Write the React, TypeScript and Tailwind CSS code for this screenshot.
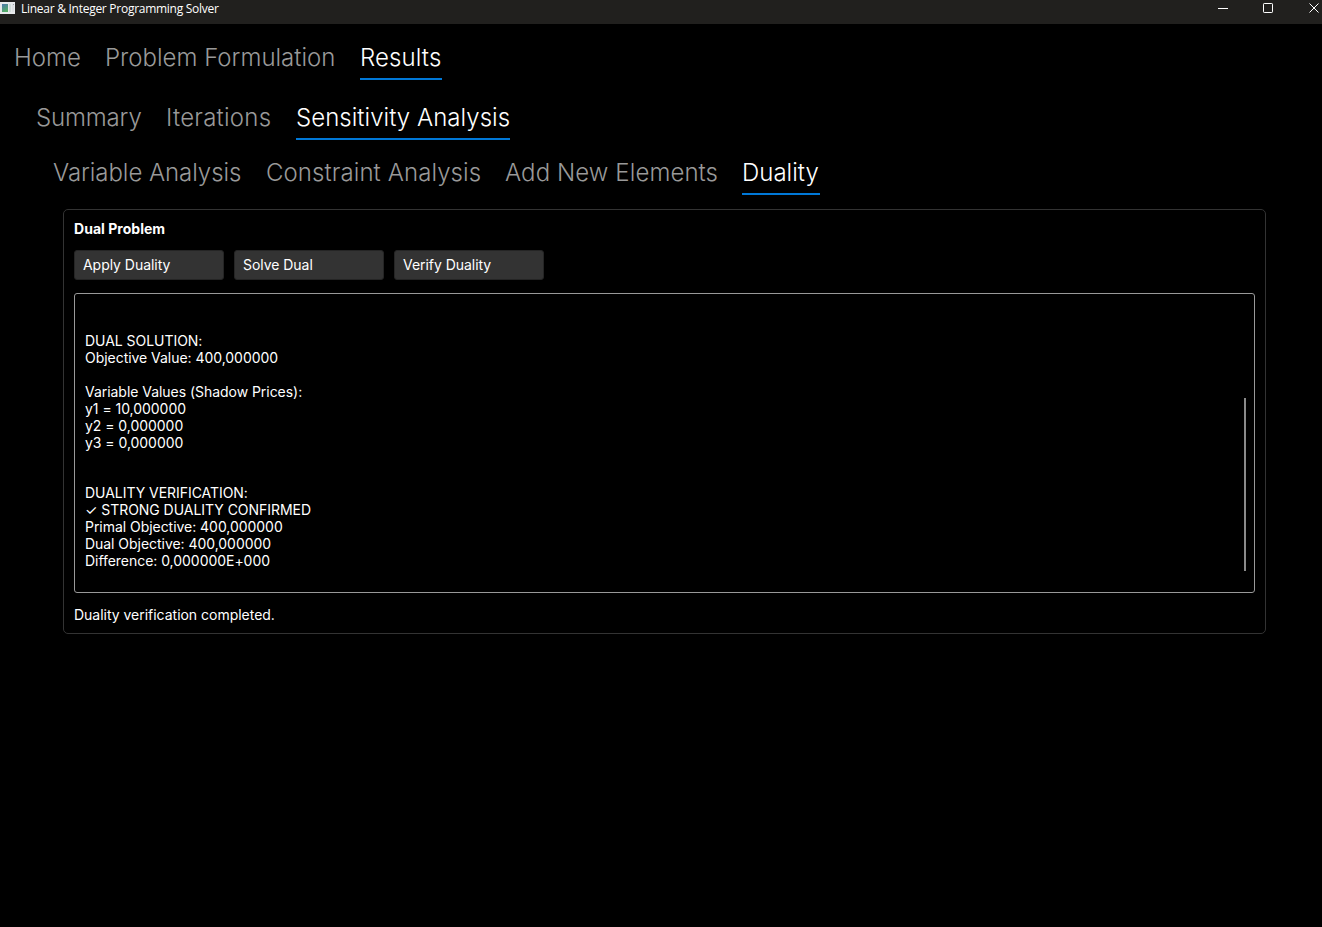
import React from "react";

type Tab = { label: string; size: string; active?: boolean };

const mainTabs: Tab[] = [
  { label: "Home", size: "w-[66px]" },
  { label: "Problem Formulation", size: "w-[230px]" },
  { label: "Results", size: "w-[82px] tracking-[0.1px]", active: true },
];
const resultTabs: Tab[] = [
  { label: "Summary", size: "w-[105px] tracking-[-0.15px]" },
  { label: "Iterations", size: "w-[105px] tracking-[0.24px]" },
  { label: "Sensitivity Analysis", size: "w-[214px] tracking-[0.03px]", active: true },
];
const analysisTabs: Tab[] = [
  { label: "Variable Analysis", size: "w-[188px] tracking-[-0.06px]" },
  { label: "Constraint Analysis", size: "w-[214px] tracking-[0.08px]" },
  { label: "Add New Elements", size: "w-[212px] tracking-[0.08px]" },
  { label: "Duality", size: "w-[78px]", active: true },
];

const solution = `DUAL SOLUTION:
Objective Value: 400,000000

Variable Values (Shadow Prices):
y1 = 10,000000
y2 = 0,000000
y3 = 0,000000`.split("\n");

const verification = `DUALITY VERIFICATION:
✓ STRONG DUALITY CONFIRMED
Primal Objective: 400,000000
Dual Objective: 400,000000
Difference: 0,000000E+000`.split("\n");

function Lines({ lines }: { lines: string[] }) {
  return (
    <div>
      {lines.map((l, i) => (
        <p key={i} className="h-[17px] whitespace-pre">{l}</p>
      ))}
    </div>
  );
}

function TabRow({ tabs, className }: { tabs: Tab[]; className: string }) {
  return (
    <nav className={`flex h-11 gap-[25px] text-2xl font-light leading-[44px] ${className}`}>
      {tabs.map((t) => (
        <button
          key={t.label}
          className={`h-11 shrink-0 whitespace-nowrap text-left ${t.size} ${
            t.active ? "border-b-2 border-[#0078d7] text-white" : "text-[#999999]"
          }`}
        >
          {t.label}
        </button>
      ))}
    </nav>
  );
}

function AppIcon() {
  return (
    <svg width="16" height="18" viewBox="0 0 16 18" className="shrink-0">
      <defs>
        <linearGradient id="pane" x1="0" y1="0" x2="0.4" y2="1">
          <stop offset="0" stopColor="#4d78ad" />
          <stop offset="1" stopColor="#55ad68" />
        </linearGradient>
      </defs>
      <rect x="0" y="2" width="15" height="12" fill="#e8eaec" />
      <rect x="2" y="4" width="6" height="8" fill="url(#pane)" />
      <rect x="9" y="4" width="2" height="8" fill="#d0dcd8" />
      <rect x="12" y="4" width="2" height="8" fill="#dde1e3" />
      <rect x="13" y="4" width="1" height="1" fill="#9aa0a6" />
    </svg>
  );
}

function WindowControls() {
  return (
    <div className="ml-auto flex shrink-0 text-white">
      <svg width="20" height="18" viewBox="0 0 20 18" fill="none" stroke="currentColor">
        <path d="M3 8.5h10" />
      </svg>
      <svg width="46" height="18" viewBox="0 0 46 18" fill="none" stroke="currentColor" className="ml-5">
        <rect x="8.5" y="3.5" width="9" height="9" rx="0.7" />
      </svg>
      <svg width="21" height="18" viewBox="0 0 21 18" fill="none" stroke="currentColor">
        <path d="M8.5 3.5l9 9m0-9l-9 9" />
      </svg>
    </div>
  );
}

export default function App() {
  return (
    <div className="flex h-[927px] w-[1322px] flex-col overflow-hidden bg-black font-['Inter',sans-serif] text-white">
      <header className="flex h-6 shrink-0 items-start bg-[#21201e]">
        <AppIcon />
        <span className="pl-[5px] font-['Open_Sans',sans-serif] text-xs leading-[18px] tracking-[-0.27px]">Linear &amp; Integer Programming Solver</span>
        <WindowControls />
      </header>
      <TabRow tabs={mainTabs} className="mt-3 pl-[14px]" />
      <TabRow tabs={resultTabs} className="mt-4 pl-[36px]" />
      <TabRow tabs={analysisTabs} className="mt-[11px] pl-[53px]" />
      <main className="ml-[63px] mt-[14px] flex h-[425px] w-[1203px] flex-col rounded-[5px] border border-[#333] px-[10px] text-sm tracking-[-0.02px]">
        <h1 className="mt-[10px] font-bold leading-[18px] tracking-[0.03px]">Dual Problem</h1>
        <div className="mt-3 flex gap-[10px]">
          {["Apply Duality", "Solve Dual", "Verify Duality"].map((b) => (
            <button key={b} className="h-[30px] w-[150px] rounded-[3px] border border-[#252525] bg-[#333] pl-2 text-left tracking-[-0.04px]">{b}</button>
          ))}
        </div>
        <section className="mt-[13px] flex h-[300px] justify-between rounded-[3px] border border-[#999] pl-[10px] pr-2">
          <div className="mt-[38px] flex flex-col gap-[33px] leading-[17px] tracking-[-0.04px]">
            <Lines lines={solution} />
            <Lines lines={verification} />
          </div>
          <div className="mt-[104px] h-[173px] w-[2px] bg-[#8a8a8a]" />
        </section>
        <p className="mt-[13px] leading-[17px]">Duality verification completed.</p>
      </main>
    </div>
  );
}
